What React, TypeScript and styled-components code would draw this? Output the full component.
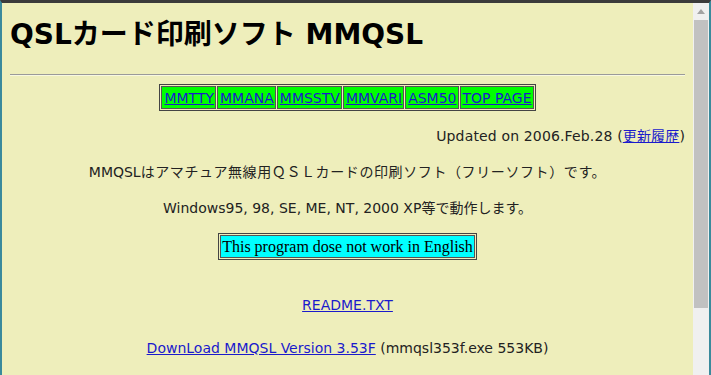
import React from 'react';
import styled, { createGlobalStyle } from 'styled-components';

const C = {
  page: '#eeeebb',
  text: '#222222',
  link: '#1a1acc',
  green: '#00ff00',
  cyan: '#00ffff',
  frame: '#3b3b3b',
  edge: '#3a8a9c',
} as const;

const Global = createGlobalStyle`
  html, body { margin: 0; padding: 0; overflow: hidden; }
  body { background: ${C.page}; }
`;

const Frame = styled.div`
  width: 711px;
  height: 375px;
  box-sizing: border-box;
  border-top: 3px solid ${C.frame};
  border-left: 2px solid ${C.edge};
  border-right: 2px solid ${C.edge};
  display: flex;
  overflow: hidden;
  background: ${C.page};
`;

const Viewport = styled.div`
  flex: 1;
  overflow: hidden;
  padding: 0 8px;
  font-family: 'DejaVu Sans', Verdana, 'Noto Sans CJK JP', sans-serif;
  font-size: 14px;
  color: ${C.text};
`;

const Scrollbar = styled.div`
  width: 16px;
  background: #f0f0f0;
  display: flex;
  flex-direction: column;
  align-items: center;
`;

const Arrow = styled.div`
  height: 17px;
  display: flex;
  align-items: center;
  justify-content: center;
`;

const Thumb = styled.div`
  width: 14px;
  height: 288px;
  background: #c1c1c1;
`;

const Title = styled.h1`
  margin: 15px 0 22px;
  font-size: 28px;
  font-weight: bold;
  line-height: 34px;
  color: #000;
  font-family: 'DejaVu Sans', Verdana, 'Noto Sans CJK JP', sans-serif;
`;

const Rule = styled.hr`
  margin: 0 0 8px;
  border: none;
  border-top: 1px solid #9a9a9a;
  border-bottom: 1px solid #f8f8e0;
`;

const Center = styled.div`
  display: flex;
  justify-content: center;
`;

const NavTable = styled.table`
  border: 1px solid #444;
  border-spacing: 1px;
  background: ${C.page};
`;

const NavCell = styled.td`
  background: ${C.green};
  border: 1px solid #555;
  padding: 3px 1px 2px 2px;
  font-size: 14px;
  line-height: 16px;
`;

const Link = styled.a`
  color: ${C.link};
  text-decoration: underline;
`;

const Updated = styled.p`
  margin: 17px 0 0;
  text-align: right;
  font-size: 14px;
  line-height: 17px;
  letter-spacing: 0.15px;
`;

const Para = styled.p<{ $gap?: number }>`
  margin: ${({ $gap }) => $gap ?? 19}px 0 0;
  text-align: center;
  font-size: 14px;
  line-height: 17px;
`;

const Jp = styled.span`
  letter-spacing: 0.6px;
`;

const NoteTable = styled.table`
  margin-top: 16px;
  border: 1px solid #444;
  border-spacing: 1px;
`;

const NoteCell = styled.td`
  background: ${C.cyan};
  border: 1px solid #555;
  padding: 1px 1px;
  font-family: 'Liberation Serif', 'Times New Roman', serif;
  font-size: 16px;
  line-height: 19px;
  color: #000;
`;

const navItems = ['MMTTY', 'MMANA', 'MMSSTV', 'MMVARI', 'ASM50', 'TOP PAGE'];

export default function App() {
  return (
    <>
      <Global />
      <Frame>
        <Viewport>
          <Title>QSLカード印刷ソフト MMQSL</Title>
          <Rule />
          <Center>
            <NavTable>
              <tbody>
                <tr>
                  {navItems.map((n) => (
                    <NavCell key={n}>
                      <Link href="#">{n}</Link>
                    </NavCell>
                  ))}
                </tr>
              </tbody>
            </NavTable>
          </Center>
          <Updated>
            Updated on 2006.Feb.28 (<Link href="#">更新履歴</Link>)
          </Updated>
          <Para>
            MMQSL<Jp>はアマチュア無線用ＱＳＬカードの印刷ソフト（フリーソフト）です。</Jp>
          </Para>
          <Para>Windows95, 98, SE, ME, NT, 2000 XP等で動作します。</Para>
          <Center>
            <NoteTable>
              <tbody>
                <tr>
                  <NoteCell>This program dose not work in English</NoteCell>
                </tr>
              </tbody>
            </NoteTable>
          </Center>
          <Para $gap={37}>
            <Link href="#">README.TXT</Link>
          </Para>
          <Para $gap={26}>
            <Link href="#">DownLoad MMQSL Version 3.53F</Link> (mmqsl353f.exe 553KB)
          </Para>
        </Viewport>
        <Scrollbar>
          <Arrow>
            <svg width="8" height="5" viewBox="0 0 8 5">
              <path d="M0 5 L4 0 L8 5 Z" fill="#a3a3a3" />
            </svg>
          </Arrow>
          <Thumb />
        </Scrollbar>
      </Frame>
    </>
  );
}
